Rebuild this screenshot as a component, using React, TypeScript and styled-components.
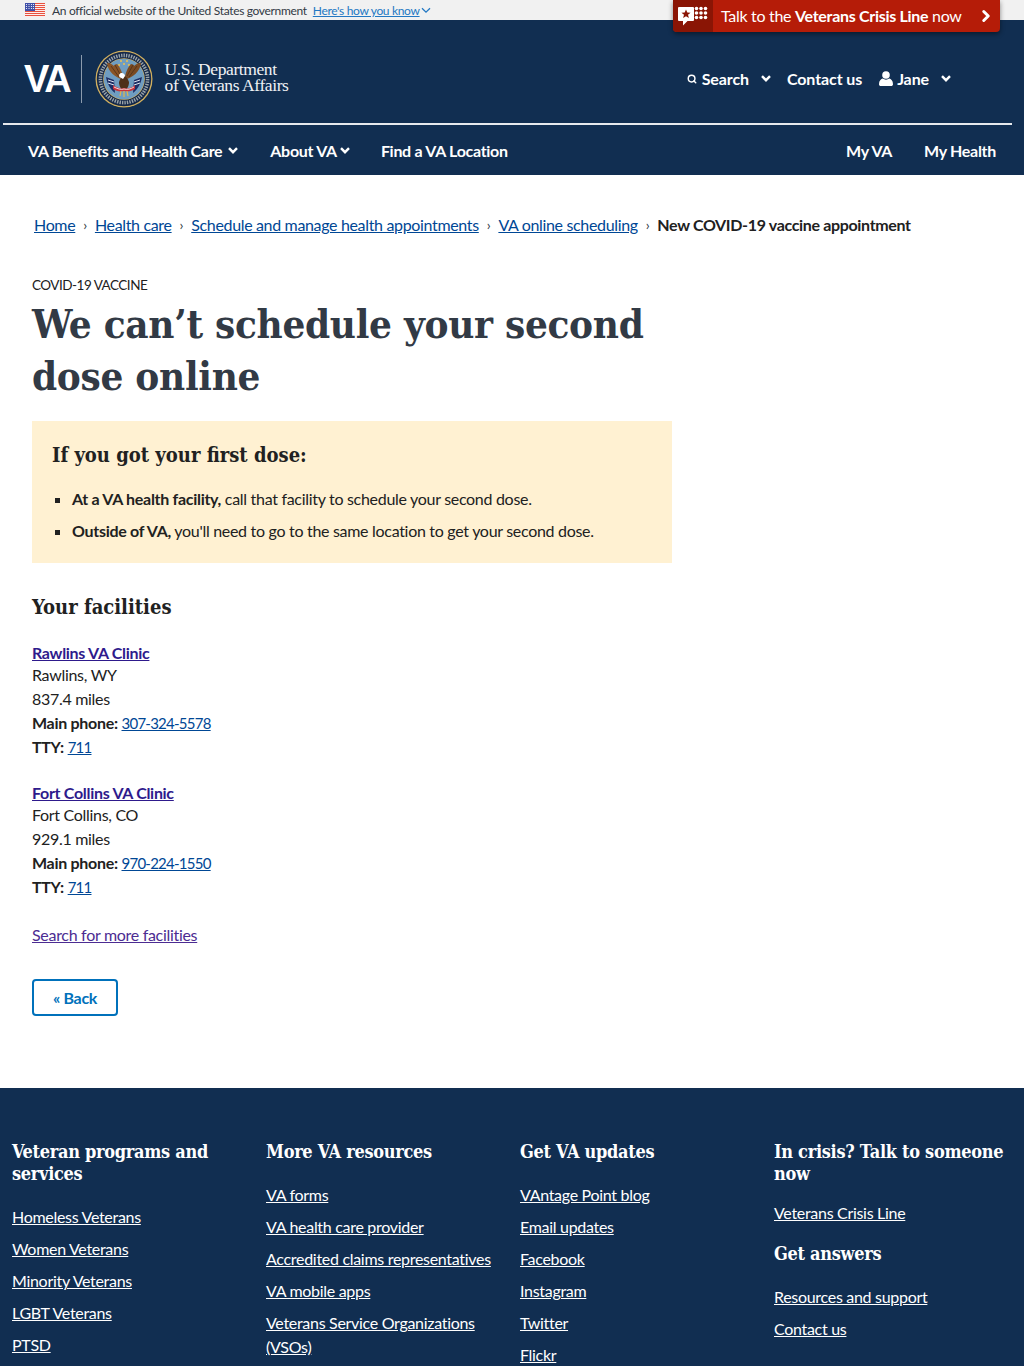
import React from 'react';
import styled, { createGlobalStyle } from 'styled-components';
import { ChevronRight, Search } from 'lucide-react';

const SANS = `Lato, "Liberation Sans", Arial, sans-serif`;
const SLAB = `"DejaVu Serif Condensed", "DejaVu Serif", serif`;
const NAVY = '#112e51';

const GlobalStyle = createGlobalStyle`
  html, body {
    margin: 0;
    padding: 0;
    height: 1366px;
    overflow: hidden;
    background: #fff;
    font-family: ${SANS};
    letter-spacing: -0.3px;
    color: #212121;
  }
  * { box-sizing: border-box; }
`;

const OfficialBar = styled.div`
  height: 20px;
  padding-left: 25px;
  display: flex;
  align-items: center;
  background: #f1f1f1;
  font-size: 12px;
  letter-spacing: -0.33px;
  color: #323a45;
`;

const OfficialText = styled.span`
  margin: 0 6px 0 7px;
`;

const HowLink = styled.a`
  color: #2378c3;
  text-decoration: underline;
  display: flex;
  align-items: center;
  gap: 1px;
`;

const CrisisButton = styled.div`
  position: absolute;
  top: 0;
  left: 673px;
  width: 327px;
  height: 32px;
  display: flex;
  align-items: center;
  background: #b51c08;
  color: #fff;
  border-radius: 0 0 4px 4px;
  box-shadow: 0 2px 5px rgba(0, 0, 0, 0.45);
  font-size: 16px;
  overflow: hidden;
`;

const CrisisIcon = styled.div`
  width: 40px;
  height: 32px;
  flex: none;
  display: flex;
  align-items: center;
  justify-content: center;
  background: #8a1505;
`;

const CrisisText = styled.span`
  margin: 0 0 2px 8px;
  flex: 1;
  white-space: nowrap;
`;

const CrisisArrow = styled.span`
  display: flex;
  margin-right: 5px;
`;

const Header = styled.header`
  background: ${NAVY};
  height: 155px;
  display: flex;
  flex-direction: column;
  color: #fff;
`;

const TopRow = styled.div`
  height: 103px;
  padding: 14px 73px 0 24px;
  display: flex;
  align-items: center;
  justify-content: space-between;
`;

const Logo = styled.div`
  display: flex;
  align-items: center;
`;

const VaMark = styled.span`
  font-family: "Liberation Sans", Arial, sans-serif;
  font-size: 38px;
  line-height: 38px;
  font-weight: 700;
  letter-spacing: -2.2px;
  padding-right: 12px;
  margin-right: 13px;
  position: relative;
  &::after {
    content: '';
    position: absolute;
    right: 0;
    top: -5px;
    bottom: -5px;
    width: 1px;
    background: #8c9bad;
  }
`;

const DeptName = styled.span`
  margin: 0 0 4px 12px;
  font-family: "Liberation Serif", "Times New Roman", serif;
  font-size: 17.5px;
  line-height: 16px;
  letter-spacing: -0.4px;
  color: #f0f2f5;
`;

const UserMenu = styled.div`
  display: flex;
  align-items: center;
  font-size: 16px;
  font-weight: 700;
  letter-spacing: -0.1px;
`;

const UserItem = styled.span<{ $gap?: number; $after?: number }>`
  display: flex;
  align-items: center;
  gap: ${p => p.$gap ?? 0}px;
  margin-right: ${p => p.$after ?? 0}px;
  white-space: nowrap;
`;

const Rule = styled.div`
  height: 2px;
  margin: 0 12px 0 3px;
  background: #e6e9ed;
`;

const MainNav = styled.nav`
  flex: 1;
  padding: 0 28px;
  display: flex;
  align-items: center;
  font-size: 16px;
  font-weight: 700;
`;

const NavItem = styled.span<{ $gap?: number; $after?: number }>`
  display: flex;
  align-items: center;
  gap: ${p => p.$gap ?? 6}px;
  margin-right: ${p => p.$after ?? 0}px;
  white-space: nowrap;
`;

const NavSpacer = styled.span`
  flex: 1;
`;

const Main = styled.main`
  height: 913px;
  padding: 0 32px;
`;

const Breadcrumb = styled.nav`
  padding: 38px 0 0 2px;
  height: 100px;
  display: flex;
  align-items: flex-start;
  font-size: 16px;
  line-height: 24px;
  letter-spacing: -0.34px;
  white-space: nowrap;
`;

const CrumbLink = styled.a`
  color: #004795;
  text-decoration: underline;
`;

const CrumbSep = styled.span`
  margin: 0 8px;
  color: #323a45;
  font-size: 14px;
`;

const CrumbCurrent = styled.span`
  font-weight: 700;
`;

const Eyebrow = styled.div`
  font-size: 13.5px;
  line-height: 20px;
  letter-spacing: -0.5px;
`;

const Title = styled.h1`
  margin: 3px 0 19px;
  width: 640px;
  font-family: ${SLAB};
  font-size: 40px;
  line-height: 52px;
  font-weight: 700;
  color: #323a45;
`;

const Alert = styled.section`
  width: 640px;
  height: 142px;
  padding: 21px 20px 0;
  background: #fff1d2;
`;

const AlertTitle = styled.h2`
  margin: 0 0 19px;
  font-family: ${SLAB};
  font-size: 20px;
  line-height: 26px;
  font-weight: 700;
  letter-spacing: 0;
  color: #212121;
`;

const AlertList = styled.ul`
  margin: 0;
  padding: 0 0 0 20px;
  list-style: square;
  font-size: 16px;
  line-height: 24px;
`;

const AlertItem = styled.li`
  margin-bottom: 8px;
`;

const SectionTitle = styled.h2`
  margin: 31px 0 22px;
  font-family: ${SLAB};
  font-size: 20px;
  line-height: 26px;
  font-weight: 700;
  letter-spacing: 0;
  color: #212121;
`;

const Facility = styled.div`
  margin-bottom: 23px;
  font-size: 16px;
  line-height: 24px;
`;

const FacilityName = styled.a`
  display: block;
  line-height: 21px;
  font-weight: 700;
  color: #2e1a8c;
  text-decoration: underline;
`;

const PhoneLink = styled.a`
  color: #004795;
  font-size: 15px;
  letter-spacing: -0.75px;
  text-decoration: underline;
`;

const MoreLink = styled.a`
  display: block;
  margin-top: 24px;
  font-size: 16px;
  line-height: 24px;
  color: #4c2c92;
  text-decoration: underline;
`;

const BackButton = styled.button`
  display: block;
  margin-top: 32px;
  width: 86px;
  height: 37px;
  border: 2px solid #0071bb;
  border-radius: 4px;
  background: #fff;
  color: #0071bb;
  font-family: ${SANS};
  font-size: 16px;
  font-weight: 700;
  letter-spacing: -0.3px;
`;

const Footer = styled.footer`
  padding: 53px 0 0 12px;
  height: 278px;
  display: grid;
  grid-template-columns: repeat(4, 254px);
  background: ${NAVY};
  color: #fff;
  overflow: hidden;
`;

const FooterColumn = styled.div`
  width: 236px;
`;

const FooterTitle = styled.h2<{ $after?: number }>`
  margin: 0 0 ${p => p.$after ?? 20}px;
  font-family: ${SLAB};
  font-size: 18px;
  line-height: 22px;
  font-weight: 700;
`;

const FooterList = styled.ul<{ $after?: number }>`
  margin: 0 0 ${p => p.$after ?? 0}px;
  padding: 0;
  list-style: none;
`;

const FooterItem = styled.li`
  margin-bottom: 8px;
  font-size: 16px;
  line-height: 24px;
`;

const FooterLink = styled.a`
  color: #fff;
  text-decoration: underline;
`;

const FlagIcon = () => (
  <svg width="20" height="14" viewBox="0 0 20 14">
    <rect width="20" height="14" fill="#fff" />
    {[0, 2, 4, 6, 8, 10, 12].map(y => (
      <rect key={y} y={y} width="20" height="1.1" fill="#e8513f" />
    ))}
    <rect width="10" height="8" fill="#3f4fa8" />
    {[1.5, 3.5, 5.5].map(y =>
      [1.5, 4, 6.5, 8.5].map(x => <circle key={`${x}-${y}`} cx={x} cy={y} r="0.6" fill="#fff" />)
    )}
  </svg>
);

const CrisisGlyph = () => (
  <svg width="30" height="20" viewBox="0 0 30 20">
    <path d="M1 1h14a1 1 0 0 1 1 1v12a1 1 0 0 1-1 1H9.500L5 19.500V15H1a1 1 0 0 1-1-1V2a1 1 0 0 1 1-1z" fill="#fff" />
    <path d="M8 3.400l1.300 3.100 3.300.2-2.600 2.100.9 3.200L8 10.300l-2.900 1.700.9-3.200-2.600-2.100 3.300-.2z" fill="#8a1505" />
    {[2.5, 7, 11.5].map(y =>
      [18.5, 23, 27.5].map(x => <circle key={`${x}-${y}`} cx={x} cy={y} r="1.800" fill="#fff" />)
    )}
  </svg>
);

const Seal = () => (
  <svg width="58" height="58" viewBox="0 0 58 58">
    <circle cx="29" cy="29" r="28.5" fill="#d3b15f" />
    <circle cx="29" cy="29" r="27.200" fill="#14284a" />
    <circle cx="29" cy="29" r="23.600" fill="none" stroke="#9aa3a8" strokeWidth="3.600" strokeDasharray="1.400 1.100" />
    <circle cx="29" cy="29" r="20.800" fill="#d3b15f" />
    <circle cx="29" cy="29" r="20.200" fill="#6f9dc1" />
    {[[26, 11], [32, 11], [29, 14], [24, 15], [34, 15]].map(([x, y]) => (
      <circle key={`${x}-${y}`} cx={x} cy={y} r="1" fill="#eec34a" />
    ))}
    <path d="M11 27l8 3 1 13c-4-3-8-9-9-16zM47 27l-8 3-1 13c4-3 8-9 9-16z" fill="#1f2f66" />
    <path d="M13 30l6 2M13 33l6 2M45 30l-6 2M45 33l-6 2" stroke="#dfe5ef" strokeWidth="1" />
    <path d="M27 29C21 28 13 22 12 13c3 0 5 1 7 3 0-1 1-2 3-2 3 3 6 9 6 15z" fill="#8a5526" />
    <path d="M31 29c6-1 14-7 15-16-3 0-5 1-7 3 0-1-1-2-3-2-3 3-6 9-6 15z" fill="#7a4a22" />
    <path d="M16 16l8 11M20 15l6 11M42 16l-8 11M38 15l-6 11" stroke="#4d2f18" strokeWidth="0.8" />
    <path d="M24 32c1-3 3-6 5-6s4 3 5 6c0 4-2 8-5 8s-5-4-5-8z" fill="#4d2f18" />
    <path d="M24.500 27c-1-2 0-4 2.500-4 1 0 3 1 3 3l-2 3z" fill="#fff" />
    <path d="M18 35c4 3 8 4 11 3 4 1 8 0 11-3v4c-3 2-7 3-11 2-4 1-8 0-11-2z" fill="#c8323a" />
    <path d="M19 37c4 2 7 3 10 2 3 1 7 0 10-2" fill="none" stroke="#fff" strokeWidth="0.8" />
    <path d="M26 41l-1 5M29 41v6M32 41l1 5" stroke="#e0b64c" strokeWidth="1.200" />
  </svg>
);

const UserIcon = () => (
  <svg width="14" height="15" viewBox="0 0 14 15" fill="#fff">
    <circle cx="7" cy="4" r="3.800" />
    <path d="M0 13.200C0 9.800 2 8 3.800 7.600 4.700 8.300 5.800 8.700 7 8.700s2.300-.4 3.200-1.100C12 8 14 9.800 14 13.200 14 14.300 13.200 15 12.200 15H1.800C.8 15 0 14.300 0 13.200z" />
  </svg>
);

const Chevron = ({ color = '#fff', weight = 2.4 }: { color?: string; weight?: number }) => (
  <svg width="10" height="7" viewBox="0 0 10 7" fill="none" stroke={color} strokeWidth={weight}>
    <path d="M1 1.200l4 4 4-4" />
  </svg>
);

const columns = [
  {
    title: 'Veteran programs and services',
    links: ['Homeless Veterans', 'Women Veterans', 'Minority Veterans', 'LGBT Veterans', 'PTSD'],
  },
  {
    title: 'More VA resources',
    links: [
      'VA forms',
      'VA health care provider',
      'Accredited claims representatives',
      'VA mobile apps',
      'Veterans Service Organizations (VSOs)',
    ],
  },
  {
    title: 'Get VA updates',
    links: ['VAntage Point blog', 'Email updates', 'Facebook', 'Instagram', 'Twitter', 'Flickr'],
  },
];

const FacilityCard = ({ name, city, miles, phone }: { name: string; city: string; miles: string; phone: string }) => (
  <Facility>
    <FacilityName>{name}</FacilityName>
    <div>{city}</div>
    <div>{miles}</div>
    <div>
      <strong>Main phone:</strong> <PhoneLink>{phone}</PhoneLink>
    </div>
    <div>
      <strong>TTY:</strong> <PhoneLink>711</PhoneLink>
    </div>
  </Facility>
);

const App: React.FC = () => {
  return (
    <>
      <GlobalStyle />
      <OfficialBar>
        <FlagIcon />
        <OfficialText>An official website of the United States government</OfficialText>
        <HowLink>
          Here's how you know
          <Chevron color="#2378c3" weight={1.3} />
        </HowLink>
      </OfficialBar>

      <CrisisButton>
        <CrisisIcon>
          <CrisisGlyph />
        </CrisisIcon>
        <CrisisText>
          Talk to the <strong>Veterans Crisis Line</strong> now
        </CrisisText>
        <CrisisArrow>
          <ChevronRight size={18} color="#fff" strokeWidth={4} />
        </CrisisArrow>
      </CrisisButton>

      <Header>
        <TopRow>
          <Logo>
            <VaMark>VA</VaMark>
            <Seal />
            <DeptName>
              U.S. Department
              <br />
              of Veterans Affairs
            </DeptName>
          </Logo>
          <UserMenu>
            <UserItem $gap={5} $after={12}>
              <Search size={10} color="#fff" strokeWidth={3.5} />
              Search
            </UserItem>
            <UserItem $after={16}>
              <Chevron />
            </UserItem>
            <UserItem $after={17}>Contact us</UserItem>
            <UserItem $gap={4} $after={12}>
              <UserIcon />
              Jane
            </UserItem>
            <UserItem>
              <Chevron />
            </UserItem>
          </UserMenu>
        </TopRow>
        <Rule />
        <MainNav>
          <NavItem $after={32}>
            VA Benefits and Health Care
            <Chevron />
          </NavItem>
          <NavItem $gap={3} $after={31}>
            About VA
            <Chevron />
          </NavItem>
          <NavItem>Find a VA Location</NavItem>
          <NavSpacer />
          <NavItem $after={32}>My VA</NavItem>
          <NavItem>My Health</NavItem>
        </MainNav>
      </Header>

      <Main>
        <Breadcrumb>
          <CrumbLink>Home</CrumbLink>
          <CrumbSep>›</CrumbSep>
          <CrumbLink>Health care</CrumbLink>
          <CrumbSep>›</CrumbSep>
          <CrumbLink>Schedule and manage health appointments</CrumbLink>
          <CrumbSep>›</CrumbSep>
          <CrumbLink>VA online scheduling</CrumbLink>
          <CrumbSep>›</CrumbSep>
          <CrumbCurrent>New COVID-19 vaccine appointment</CrumbCurrent>
        </Breadcrumb>

        <Eyebrow>COVID-19 VACCINE</Eyebrow>
        <Title>We can’t schedule your second dose online</Title>

        <Alert>
          <AlertTitle>If you got your first dose:</AlertTitle>
          <AlertList>
            <AlertItem>
              <strong>At a VA health facility,</strong> call that facility to schedule your second dose.
            </AlertItem>
            <AlertItem>
              <strong>Outside of VA,</strong> you'll need to go to the same location to get your second dose.
            </AlertItem>
          </AlertList>
        </Alert>

        <SectionTitle>Your facilities</SectionTitle>
        <FacilityCard name="Rawlins VA Clinic" city="Rawlins, WY" miles="837.4 miles" phone="307-324-5578" />
        <FacilityCard name="Fort Collins VA Clinic" city="Fort Collins, CO" miles="929.1 miles" phone="970-224-1550" />
        <MoreLink>Search for more facilities</MoreLink>
        <BackButton>« Back</BackButton>
      </Main>

      <Footer>
        {columns.map(column => (
          <FooterColumn key={column.title}>
            <FooterTitle>{column.title}</FooterTitle>
            <FooterList>
              {column.links.map(link => (
                <FooterItem key={link}>
                  <FooterLink>{link}</FooterLink>
                </FooterItem>
              ))}
            </FooterList>
          </FooterColumn>
        ))}
        <FooterColumn>
          <FooterTitle $after={16}>In crisis? Talk to someone now</FooterTitle>
          <FooterList $after={18}>
            <FooterItem>
              <FooterLink>Veterans Crisis Line</FooterLink>
            </FooterItem>
          </FooterList>
          <FooterTitle>Get answers</FooterTitle>
          <FooterList $after={22}>
            <FooterItem>
              <FooterLink>Resources and support</FooterLink>
            </FooterItem>
            <FooterItem>
              <FooterLink>Contact us</FooterLink>
            </FooterItem>
          </FooterList>
          <FooterTitle>Call us</FooterTitle>
        </FooterColumn>
      </Footer>
    </>
  );
};

export default App;
